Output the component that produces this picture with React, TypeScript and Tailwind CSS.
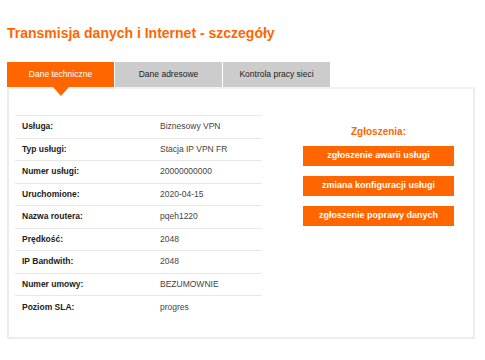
import React from "react";

const rows: [string, string][] = [
  ["Usługa:", "Biznesowy VPN"],
  ["Typ usługi:", "Stacja IP VPN FR"],
  ["Numer usługi:", "20000000000"],
  ["Uruchomione:", "2020-04-15"],
  ["Nazwa routera:", "pqeh1220"],
  ["Prędkość:", "2048"],
  ["IP Bandwith:", "2048"],
  ["Numer umowy:", "BEZUMOWNIE"],
  ["Poziom SLA:", "progres"],
];

export default function App() {
  return (
    <div
      className="w-[485px] h-[360px] bg-white pl-[7px] pt-[23px]"
      style={{ fontFamily: '"Liberation Sans", Arial, sans-serif' }}
    >
      <h1 className="text-[14px] leading-[20px] font-bold text-[#ff6600] h-[39px]">
        Transmisja danych i Internet - szczegóły
      </h1>
      <div className="flex h-[25px] text-[8.5px]">
        <div className="relative w-[107px] bg-[#ff6600] text-white flex items-center justify-center">
          Dane techniczne
          <div className="absolute left-1/2 -translate-x-1/2 top-[25px] w-0 h-0 border-l-[8px] border-r-[8px] border-t-[9px] border-l-transparent border-r-transparent border-t-[#ff6600] z-10" />
        </div>
        <div className="w-[107px] ml-[1px] bg-[#cccccc] text-[#222] flex items-center justify-center">
          Dane adresowe
        </div>
        <div className="w-[107px] ml-[1px] bg-[#cccccc] text-[#222] flex items-center justify-center">
          Kontrola pracy sieci
        </div>
      </div>
      <div className="w-[468px] h-[252px] border-2 border-[#ececec] border-t-[#f2f2f2] flex pt-[26px] pl-[6px]">
        <div className="w-[247px] border-t border-[#e8e8e8]">
          {rows.map(([k, v], i) => (
            <div
              key={k}
              className={`flex h-[22.5px] items-center text-[8.5px] text-[#333] ${
                i < rows.length - 1 ? "border-b border-[#e8e8e8]" : ""
              }`}
            >
              <div className="w-[145px] pl-[7px] font-bold text-[#222]">{k}</div>
              <div className="text-[#444]">{v}</div>
            </div>
          ))}
        </div>
        <div className="flex-1 flex flex-col items-center pt-[11px] pl-[22px]">
          <div className="text-[10px] font-bold text-[#ff6600] leading-[12px] mb-[8px]">
            Zgłoszenia:
          </div>
          <div className="flex flex-col gap-[10px]">
            {[
              "zgłoszenie awarii usługi",
              "zmiana konfiguracji usługi",
              "zgłoszenie poprawy danych",
            ].map((t) => (
              <div
                key={t}
                className="w-[151px] h-[20px] bg-[#ff6600] text-white font-bold text-[9px] flex items-center justify-center"
              >
                {t}
              </div>
            ))}
          </div>
        </div>
      </div>
    </div>
  );
}
